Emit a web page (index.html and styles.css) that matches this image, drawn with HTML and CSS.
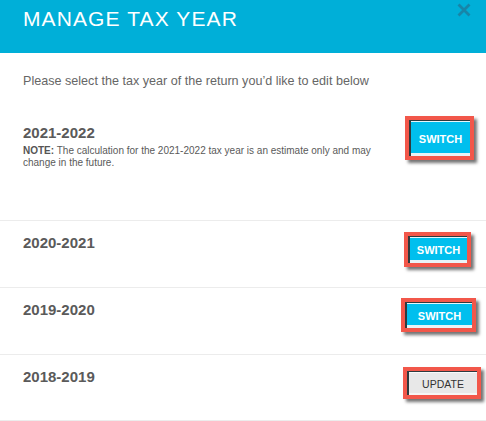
FILE: index.html
```html
<!DOCTYPE html>
<html lang="en">
<head>
<meta charset="utf-8">
<title>Manage Tax Year</title>
<link rel="stylesheet" href="styles.css">
</head>
<body>
<div class="modal">
  <header class="modal-head">
    <h1 class="title">MANAGE TAX YEAR</h1>
    <span class="close" aria-label="Close">
      <svg width="14" height="14" viewBox="0 0 14 14"><path d="M1.5 1.5 L12.5 12.5 M12.5 1.5 L1.5 12.5" stroke="#1785a8" stroke-width="2.8" fill="none"/></svg>
    </span>
  </header>
  <p class="intro">Please select the tax year of the return you’d like to edit below</p>
  <div class="rows">
    <div class="row row-first">
      <div class="info">
        <h2 class="year">2021-2022</h2>
        <p class="note"><b>NOTE:</b> The calculation for the 2021-2022 tax year is an estimate only and may change in the future.</p>
      </div>
      <button class="btn btn-1"><span class="face">SWITCH</span></button>
    </div>
    <div class="row">
      <div class="info"><h2 class="year">2020-2021</h2></div>
      <button class="btn btn-2"><span class="face">SWITCH</span></button>
    </div>
    <div class="row">
      <div class="info"><h2 class="year">2019-2020</h2></div>
      <button class="btn btn-3"><span class="face">SWITCH</span></button>
    </div>
    <div class="row row-last">
      <div class="info"><h2 class="year">2018-2019</h2></div>
      <button class="btn btn-4"><span class="face face-gray">UPDATE</span></button>
    </div>
  </div>
</div>
</body>
</html>
```
FILE: styles.css
```css
* { box-sizing: border-box; }
html, body { margin: 0; padding: 0; background: #fff; }
body { font-family: "Liberation Sans", Arial, sans-serif; color: #5a5a5a; }

.modal { width: 486px; }

.modal-head {
  height: 53px;
  background: #00afd8;
  display: flex;
  justify-content: space-between;
  align-items: flex-start;
  padding: 8px 15px 0 23px;
}
.title {
  margin: 0;
  font-size: 21px;
  line-height: 21px;
  font-weight: normal;
  letter-spacing: 1.1px;
  color: #fff;
}
.close {
  display: block;
  width: 14px;
  height: 14px;
  margin-top: -5px;
}
.close svg { display: block; }

.intro {
  margin: 0;
  padding: 20px 23px 22px;
  font-size: 12.6px;
  line-height: 16px;
  color: #666;
}

.row {
  display: flex;
  justify-content: space-between;
  align-items: flex-start;
  height: 67px;
  padding: 13px 0 0 23px;
  border-bottom: 1px solid #ececec;
}
.row-first { height: 110px; }
.row-last { height: 66px; }

.info { max-width: 370px; }
.year {
  margin: 0 0 3px;
  font-size: 15px;
  line-height: 18px;
  font-weight: bold;
  color: #5a5a5a;
}
.note {
  margin: 0;
  font-size: 10px;
  line-height: 12px;
  color: #5a5a5a;
}
.note b { color: #555; }

.btn {
  display: flex;
  padding: 0;
  border: 4px solid #f2574a;
  background: #fff;
  box-shadow: 3px 3px 3px rgba(0, 0, 0, 0.55);
  font-family: "Liberation Sans", Arial, sans-serif;
  cursor: pointer;
}
.face {
  flex: 1;
  display: flex;
  align-items: center;
  justify-content: center;
  background: #00bfee;
  color: #fff;
  font-size: 11px;
  font-weight: bold;
  border-left: 2px solid #2f3a3e;
  border-top: 1px solid #2f3a3e;
  box-shadow: inset 0 1px 0 #e6f6fb, inset 0 -3px 0 #e9f4f7;
}
.face-gray {
  background: #e8e8e8;
  color: #333;
  font-weight: normal;
  font-size: 10.5px;
  box-shadow: inset 0 1px 0 #fafafa, inset 0 -2px 0 #f6f6f6;
}

.btn-1 { width: 69px; height: 44px; margin: -8px 12px 0 0; }
.btn-2 { width: 67px; height: 35px; margin: -2px 15px 0 0; }
.btn-3 { width: 75px; height: 34px; margin: -3px 10px 0 0; }
.btn-4 { width: 78px; height: 32px; margin: -1px 5px 0 0; }
```
